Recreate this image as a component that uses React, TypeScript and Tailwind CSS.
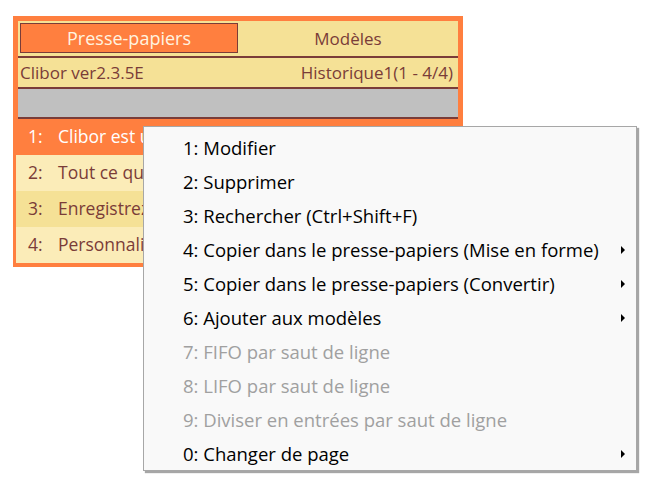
import React from "react";

type MenuItem = { label: string; disabled?: boolean; sub?: boolean };

const menuItems: MenuItem[] = [
  { label: "1: Modifier" },
  { label: "2: Supprimer" },
  { label: "3: Rechercher (Ctrl+Shift+F)" },
  { label: "4: Copier dans le presse-papiers (Mise en forme)", sub: true },
  { label: "5: Copier dans le presse-papiers (Convertir)", sub: true },
  { label: "6: Ajouter aux modèles", sub: true },
  { label: "7: FIFO par saut de ligne", disabled: true },
  { label: "8: LIFO par saut de ligne", disabled: true },
  { label: "9: Diviser en entrées par saut de ligne", disabled: true },
  { label: "0: Changer de page", sub: true },
];

const history = [
  { n: "1:", text: "Clibor est un gestionnaire de presse-papiers" },
  { n: "2:", text: "Tout ce que vous copiez est conservé" },
  { n: "3:", text: "Enregistrez vos textes fréquents" },
  { n: "4:", text: "Personnalisez l'apparence à votre goût" },
];

function Arrow() {
  return (
    <svg width="4" height="8" viewBox="0 0 4 8" className="absolute right-[11px] top-[13px]">
      <path d="M0 0 L4 4 L0 8 Z" fill="#000" />
    </svg>
  );
}

export default function App() {
  const font = { fontFamily: '"Open Sans", "Noto Sans", sans-serif' };
  return (
    <div className="relative w-[656px] h-[495px] bg-white overflow-hidden" style={font}>
      {/* Clibor main window */}
      <div className="ml-[13px] mt-[16px] w-[450px] h-[251px] bg-[#ff7f3f] p-[5px] pl-[5px] flex flex-col">
        <div className="bg-[#f5e196] flex flex-col">
          <div className="flex h-[35px] pt-[2px] pl-[2px]">
            <div className="w-[218px] h-[30px] bg-[#ff7f3f] border border-[#7a3c38] flex items-center justify-center text-[#fff4e0] text-[18px] leading-none">
              Presse-papiers
            </div>
            <div className="flex-1 h-[30px] flex items-center justify-center text-[#7a3c38] text-[17px] leading-none">
              Modèles
            </div>
          </div>
          <div className="h-[2px] bg-[#7a3c38]" />
          <div className="h-[29px] flex items-center justify-between px-[2px] pr-[5px] text-[#7a3c38] text-[17px] leading-none">
            <span>Clibor ver2.3.5E</span>
            <span>Historique1(1 - 4/4)</span>
          </div>
          <div className="h-[2px] bg-[#7a3c38]" />
          <div className="h-[28px] bg-[#c0c0c0]" />
          <div className="h-[2px] bg-[#7a3c38]" />
        </div>
        <div className="-ml-[2px] flex flex-col">
          {history.map((h, i) => (
            <div
              key={h.n}
              className={
                "h-[36px] flex items-center whitespace-nowrap overflow-hidden text-[17.5px] leading-none " +
                (i === 0
                  ? "bg-[#ff7f3f] text-white"
                  : i % 2 === 1
                  ? "bg-[#fbecb8] text-[#7a3c38]"
                  : "bg-[#f5e196] text-[#7a3c38]")
              }
            >
              <span className="w-[42px] pl-[12px]">{h.n}</span>
              <span>{h.text}</span>
            </div>
          ))}
        </div>
      </div>

      {/* Context menu */}
      <div className="absolute left-[143px] top-[126px] w-[494px] h-[345px] bg-[#f9f9f9] border border-[#a7a7a7] shadow-[2px_2px_1px_rgba(0,0,0,0.35)] pt-[4px]">
        {menuItems.map((m) => (
          <div
            key={m.label}
            className={
              "relative h-[34px] flex items-center pl-[39px] text-[18.5px] leading-none whitespace-nowrap " +
              (m.disabled ? "text-[#a0a0a0]" : "text-black")
            }
          >
            {m.label}
            {m.sub && <Arrow />}
          </div>
        ))}
      </div>
    </div>
  );
}
